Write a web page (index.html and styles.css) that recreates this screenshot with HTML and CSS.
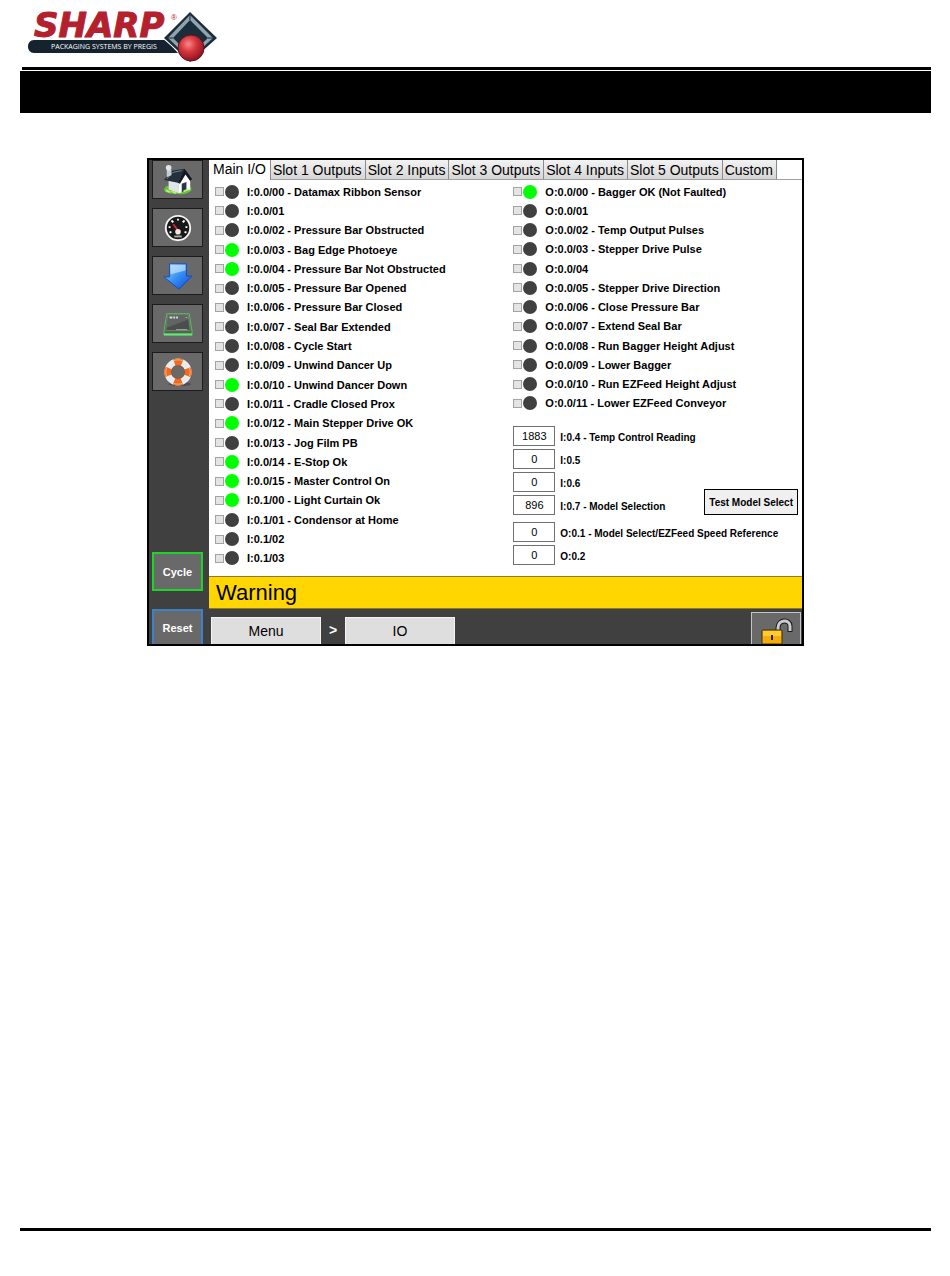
FILE: index.html
```
<!DOCTYPE html>
<html lang="en">
<head>
    <meta charset="UTF-8">
    <title>Main I/O</title>
    <link rel="stylesheet" href="styles.css">
</head>
<body>
<div class="page">
    <header class="header">
        <svg class="logo" viewBox="0 0 190 52" role="img" aria-label="Sharp Packaging Systems by Pregis">
            <defs>
                <radialGradient id="ball" cx="40%" cy="35%" r="65%">
                    <stop offset="0" stop-color="#f58a86"/>
                    <stop offset="0.45" stop-color="#d8383f"/>
                    <stop offset="1" stop-color="#8f1220"/>
                </radialGradient>
            </defs>
            <path d="M6 29H138L150 42H6C-2 42-2 29 6 29Z" fill="#15232f"/>
            <text class="logo-name" x="6" y="26">SHARP</text>
            <text class="logo-reg" x="143" y="9">®</text>
            <text class="logo-sub" x="23" y="38">PACKAGING SYSTEMS BY PREGIS</text>
            <path d="M162 0L190 27L162 51L134 27Z" fill="#fff"/>
            <path d="M162 1L189 27L162 51L136 27Z" fill="#1b2d3b"/>
            <path d="M162 4L185 27L162 48L140 27Z" fill="#91a4ae"/>
            <path d="M162 9L180 27L162 44L145 27Z" fill="#1b2d3b"/>
            <path d="M162 9V4M180 27H185M145 27H140" stroke="#1b2d3b"/>
            <circle cx="163" cy="37" r="13" fill="url(#ball)" stroke="#5c1420"/>
        </svg>
    </header>
    <div class="rule"></div>
    <div class="title-bar"></div>

    <main class="screen">
        <nav class="sidebar">
            <button class="side-btn" type="button" aria-label="Home">
                <svg viewBox="0 0 32 32">
                    <path d="M1 26C2 22 7 21 12 22L29 23C34 28 25 32 15 31C8 31 1 29 1 26Z" fill="#62c436"/>
                    <path d="M6 16L17 19V30L6 26Z" fill="#dfe5e8"/>
                    <path d="M17 19L24 9L29 16V26L17 30Z" fill="#fff"/>
                    <path d="M20 20L25 18V27L20 29Z" fill="#26384a"/>
                    <path d="M1 16L9 6L23 4L16 19Z" fill="#24303c"/>
                    <path d="M16 19L23 4L31 15L29 17L24 10L18 20Z" fill="#101820"/>
                    <path d="M4 15L10 8L20 6" stroke="#6e8291" fill="none"/>
                    <path d="M4 5H9V11L4 13Z" fill="#c7cccf"/>
                    <circle cx="6" cy="3" r="3" fill="#e2e6e8"/>
                    <path d="M3 27L8 29M9 28L14 30M22 28L27 26" stroke="#b4ed7c" stroke-width="2"/>
                </svg>
            </button>
            <button class="side-btn" type="button" aria-label="Gauge">
                <svg viewBox="0 0 32 32">
                    <circle cx="16" cy="16" r="13" fill="#181818" stroke="#f4f4f4" stroke-width="2"/>
                    <path d="M7 21L9 20M6 15H8M9 8L11 10M16 6V8M23 8L21 10M26 15H24M25 21L23 20" stroke="#fff" stroke-width="2"/>
                    <path d="M11 12L17 20" stroke="#d9262c" stroke-width="2"/>
                    <circle cx="16" cy="20" r="3" fill="#f0e5df"/>
                    <path d="M12 25H20" stroke="#aaa" stroke-width="2"/>
                </svg>
            </button>
            <button class="side-btn" type="button" aria-label="Download">
                <svg viewBox="0 0 32 32">
                    <defs>
                        <linearGradient id="blue" x1="0" y1="0" x2="1" y2="1">
                            <stop offset="0" stop-color="#a9dcff"/>
                            <stop offset="0.5" stop-color="#368ff5"/>
                            <stop offset="1" stop-color="#0b45cf"/>
                        </linearGradient>
                    </defs>
                    <path d="M7 3H25V16H31L17 30L1 17H7Z" fill="url(#blue)" stroke="#1147c4"/>
                    <path d="M8 4H24V10L8 14Z" fill="#d6efff" opacity="0.6"/>
                </svg>
            </button>
            <button class="side-btn" type="button" aria-label="I/O module">
                <svg viewBox="0 0 32 32">
                    <path d="M4 5H28L31 24V28H1V24Z" fill="#536353" stroke="#58c464"/>
                    <path d="M5 6H27L29 23H3Z" fill="#4b4e4d" stroke="#6f8971"/>
                    <path d="M5 6H27L28 11L4 20Z" fill="#767a78" opacity="0.5"/>
                    <path d="M7 9H10M11 9H13M14 9H16" stroke="#d5dcd5" stroke-width="2"/>
                    <path d="M14 22H26M24 9H26" stroke="#a8b3a8"/>
                    <path d="M1 27H31" stroke="#6be776" stroke-width="2"/>
                </svg>
            </button>
            <button class="side-btn" type="button" aria-label="Help">
                <svg viewBox="0 0 32 32">
                    <ellipse cx="18" cy="29" rx="12" ry="2" fill="#4e4e4e"/>
                    <circle cx="16" cy="16" r="11" fill="none" stroke="#e9ecee" stroke-width="7"/>
                    <circle cx="16" cy="16" r="11" fill="none" stroke="#ee6b20" stroke-width="7" stroke-dasharray="8.6 8.68" stroke-dashoffset="4.3"/>
                    <circle cx="16" cy="16" r="13" fill="none" stroke="#ffb37a" stroke-dasharray="10 10.4" stroke-dashoffset="5"/>
                    <circle cx="16" cy="16" r="7" fill="none" stroke="#a5532a"/>
                </svg>
            </button>
            <button class="side-btn cycle" type="button">Cycle</button>
            <button class="side-btn reset" type="button">Reset</button>
        </nav>

        <div class="content">
            <div class="tabs" role="tablist">
                <button class="tab active" type="button" role="tab" aria-selected="true">Main I/O</button>
                <button class="tab" type="button" role="tab">Slot 1 Outputs</button>
                <button class="tab" type="button" role="tab">Slot 2 Inputs</button>
                <button class="tab" type="button" role="tab">Slot 3 Outputs</button>
                <button class="tab" type="button" role="tab">Slot 4 Inputs</button>
                <button class="tab" type="button" role="tab">Slot 5 Outputs</button>
                <button class="tab" type="button" role="tab">Custom</button>
            </div>

            <div class="panel">
                <div class="io-list inputs">
                    <label class="io"><input type="checkbox"><span class="dot"></span>I:0.0/00 - Datamax Ribbon Sensor</label>
                    <label class="io"><input type="checkbox"><span class="dot"></span>I:0.0/01</label>
                    <label class="io"><input type="checkbox"><span class="dot"></span>I:0.0/02 - Pressure Bar Obstructed</label>
                    <label class="io"><input type="checkbox"><span class="dot on"></span>I:0.0/03 - Bag Edge Photoeye</label>
                    <label class="io"><input type="checkbox"><span class="dot on"></span>I:0.0/04 - Pressure Bar Not Obstructed</label>
                    <label class="io"><input type="checkbox"><span class="dot"></span>I:0.0/05 - Pressure Bar Opened</label>
                    <label class="io"><input type="checkbox"><span class="dot"></span>I:0.0/06 - Pressure Bar Closed</label>
                    <label class="io"><input type="checkbox"><span class="dot"></span>I:0.0/07 - Seal Bar Extended</label>
                    <label class="io"><input type="checkbox"><span class="dot"></span>I:0.0/08 - Cycle Start</label>
                    <label class="io"><input type="checkbox"><span class="dot"></span>I:0.0/09 - Unwind Dancer Up</label>
                    <label class="io"><input type="checkbox"><span class="dot on"></span>I:0.0/10 - Unwind Dancer Down</label>
                    <label class="io"><input type="checkbox"><span class="dot"></span>I:0.0/11 - Cradle Closed Prox</label>
                    <label class="io"><input type="checkbox"><span class="dot on"></span>I:0.0/12 - Main Stepper Drive OK</label>
                    <label class="io"><input type="checkbox"><span class="dot"></span>I:0.0/13 - Jog Film PB</label>
                    <label class="io"><input type="checkbox"><span class="dot on"></span>I:0.0/14 - E-Stop Ok</label>
                    <label class="io"><input type="checkbox"><span class="dot on"></span>I:0.0/15 - Master Control On</label>
                    <label class="io"><input type="checkbox"><span class="dot on"></span>I:0.1/00 - Light Curtain Ok</label>
                    <label class="io"><input type="checkbox"><span class="dot"></span>I:0.1/01 - Condensor at Home</label>
                    <label class="io"><input type="checkbox"><span class="dot"></span>I:0.1/02</label>
                    <label class="io"><input type="checkbox"><span class="dot"></span>I:0.1/03</label>
                </div>

                <div class="right">
                    <div class="io-list outputs">
                        <label class="io"><input type="checkbox"><span class="dot on"></span>O:0.0/00 - Bagger OK (Not Faulted)</label>
                        <label class="io"><input type="checkbox"><span class="dot"></span>O:0.0/01</label>
                        <label class="io"><input type="checkbox"><span class="dot"></span>O:0.0/02 - Temp Output Pulses</label>
                        <label class="io"><input type="checkbox"><span class="dot"></span>O:0.0/03 - Stepper Drive Pulse</label>
                        <label class="io"><input type="checkbox"><span class="dot"></span>O:0.0/04</label>
                        <label class="io"><input type="checkbox"><span class="dot"></span>O:0.0/05 - Stepper Drive Direction</label>
                        <label class="io"><input type="checkbox"><span class="dot"></span>O:0.0/06 - Close Pressure Bar</label>
                        <label class="io"><input type="checkbox"><span class="dot"></span>O:0.0/07 - Extend Seal Bar</label>
                        <label class="io"><input type="checkbox"><span class="dot"></span>O:0.0/08 - Run Bagger Height Adjust</label>
                        <label class="io"><input type="checkbox"><span class="dot"></span>O:0.0/09 - Lower Bagger</label>
                        <label class="io"><input type="checkbox"><span class="dot"></span>O:0.0/10 - Run EZFeed Height Adjust</label>
                        <label class="io"><input type="checkbox"><span class="dot"></span>O:0.0/11 - Lower EZFeed Conveyor</label>
                    </div>

                    <div class="readings">
                        <div class="reading"><input type="text" id="i04" value="1883"><label for="i04">I:0.4 - Temp Control Reading</label></div>
                        <div class="reading"><input type="text" id="i05" value="0"><label for="i05">I:0.5</label></div>
                        <div class="reading"><input type="text" id="i06" value="0"><label for="i06">I:0.6</label></div>
                        <div class="reading">
                            <input type="text" id="i07" value="896"><label for="i07">I:0.7 - Model Selection</label>
                            <button class="test-btn" type="button">Test Model Select</button>
                        </div>
                        <div class="reading analog-out"><input type="text" id="o01" value="0"><label for="o01">O:0.1 - Model Select/EZFeed Speed Reference</label></div>
                        <div class="reading"><input type="text" id="o02" value="0"><label for="o02">O:0.2</label></div>
                    </div>
                </div>
            </div>

            <div class="warning">Warning</div>

            <div class="crumbs">
                <button class="crumb" type="button">Menu</button>
                <span class="sep">&gt;</span>
                <button class="crumb" type="button">IO</button>
                <button class="lock" type="button" aria-label="Unlock">
                    <svg viewBox="0 0 48 31">
                        <path d="M26 18V15C26 6 38 6 38 13V19" fill="none" stroke="#1c1c1c" stroke-width="5"/>
                        <path d="M26 18V15C26 6 38 6 38 13V18" fill="none" stroke="#c9cdd0" stroke-width="3"/>
                        <rect x="10" y="17" width="20" height="14" rx="1" fill="#f5ad0c" stroke="#40300a"/>
                        <path d="M11 18H29V23H11Z" fill="#ffcb35"/>
                        <path d="M19 22H21V27H19Z" fill="#2d2108"/>
                    </svg>
                </button>
            </div>
        </div>
    </main>

    <footer class="footer"></footer>
</div>
</body>
</html>
```
FILE: styles.css
```
* {
    box-sizing: border-box;
    margin: 0;
    padding: 0;
}

body {
    background: #fff;
    color: #000;
    font-family: "Liberation Sans", Arial, sans-serif;
    font-size: 11px;
}

button,
input {
    font-family: inherit;
}

.page {
    display: flex;
    flex-direction: column;
    min-height: 100vh;
    padding: 11px 19px 45px 20px;
}

/* page header */
.header {
    padding-left: 8px;
}

.logo {
    display: block;
    width: 190px;
    height: 52px;
    overflow: visible;
}

.logo-name {
    font-family: "DejaVu Sans", sans-serif;
    font-size: 34px;
    font-weight: bold;
    font-style: italic;
    fill: #b3202e;
    stroke: #b3202e;
    stroke-width: 1px;
}

.logo-reg {
    font-size: 8px;
    fill: #b3202e;
}

.logo-sub {
    font-family: "Open Sans", "Liberation Sans", sans-serif;
    font-size: 7px;
    fill: #fff;
}

.rule {
    height: 3px;
    margin: 4px 0 1px 2px;
    background: #000;
}

.title-bar {
    height: 42px;
    background: #000;
}

.footer {
    height: 3px;
    margin-top: auto;
    background: #000;
}

/* operator screen */
.screen {
    display: flex;
    width: 100%;
    max-width: 657px;
    margin: 45px auto;
    border: 2px solid #000;
    background: #404040;
}

.sidebar {
    display: flex;
    flex-direction: column;
    gap: 9px;
    width: 60px;
    padding: 0 6px 0 3px;
}

.side-btn {
    display: flex;
    align-items: center;
    justify-content: center;
    height: 39px;
    border: 1px solid #1c1c1c;
    background: #696969;
    color: #fff;
    font-size: 11px;
    font-weight: bold;
}

.side-btn svg {
    width: 30px;
    height: 30px;
}

.cycle {
    margin-top: auto;
    margin-bottom: 9px;
    border: 2px solid #1fd32b;
}

.reset {
    height: 35px;
    border: 2px solid #3c82c8;
    border-bottom: 0;
}

.content {
    display: flex;
    flex: 1;
    flex-direction: column;
    min-width: 0;
}

/* tabs */
.tabs {
    display: flex;
    height: 20px;
    border-bottom: 1px solid #a0a0a0;
    background: #fff;
}

.tab {
    padding: 0 3px 0 2px;
    border: 0;
    border-right: 1px solid #8c8c8c;
    background: linear-gradient(#f2f2f2, #d6d6d6);
    font-size: 14px;
    white-space: nowrap;
}

.tab.active {
    margin-bottom: -1px;
    padding: 0 4px 3px;
    background: #fff;
}

/* input / output lists */
.panel {
    display: grid;
    grid-template-columns: 51fr 49fr;
    padding: 2px 2px 8px 6px;
    background: #fff;
}

.io-list {
    display: grid;
    grid-auto-rows: 1fr;
}

.inputs {
    min-height: 386px;
}

.outputs {
    min-height: 231px;
}

.io {
    display: flex;
    align-items: center;
    font-weight: bold;
    white-space: nowrap;
}

.io input {
    width: 9px;
    height: 9px;
    margin-right: 1px;
    appearance: none;
    border: 1px solid #a3a3a3;
    background: #e4e4e4;
}

.io input:checked {
    background: #404040;
}

.dot {
    width: 14px;
    height: 14px;
    margin-right: 8px;
    border-radius: 50%;
    background: #404040;
}

.dot.on {
    background: #00ff00;
}

/* analog values */
.readings {
    display: flex;
    flex-direction: column;
    gap: 3px;
    margin-top: 13px;
}

.reading {
    display: flex;
    height: 20px;
}

.reading input {
    width: 42px;
    margin-right: 5px;
    border: 1px solid #707070;
    font-size: 11px;
    text-align: center;
}

.reading label {
    padding-top: 6px;
    font-size: 10px;
    font-weight: bold;
    white-space: nowrap;
}

.analog-out {
    margin-top: 4px;
}

.test-btn {
    align-self: flex-end;
    height: 26px;
    margin-left: auto;
    margin-right: 2px;
    padding: 0 4px;
    border: 1px solid #000;
    background: #f0f0f0;
    font-size: 10px;
    font-weight: bold;
    white-space: nowrap;
}

/* status and breadcrumb */
.warning {
    padding-left: 7px;
    border-top: 1px solid #8b7a2a;
    border-bottom: 1px solid #8b7a2a;
    background: #ffd600;
    font-size: 22px;
    line-height: 31px;
}

.crumbs {
    display: flex;
    align-items: flex-end;
    height: 35px;
    padding: 0 1px 0 2px;
}

.crumb {
    width: 110px;
    height: 27px;
    border: 1px solid #f4f4f4;
    border-bottom: 0;
    background: #dedede;
    font-size: 14px;
}

.sep {
    width: 24px;
    color: #fff;
    font-size: 14px;
    font-weight: bold;
    line-height: 27px;
    text-align: center;
}

.lock {
    height: 32px;
    margin-left: auto;
    border: 1px solid #c4c4c4;
    border-bottom: 0;
    background: #696969;
}

.lock svg {
    display: block;
    width: 48px;
    height: 31px;
}
```
